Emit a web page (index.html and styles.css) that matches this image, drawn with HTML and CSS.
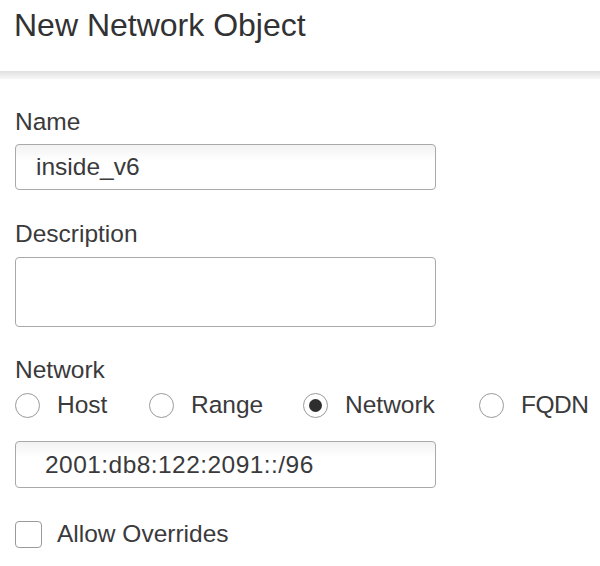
FILE: index.html
```html
<!DOCTYPE html>
<html>
<head>
<meta charset="utf-8">
<link rel="stylesheet" href="styles.css">
</head>
<body>
<div class="dialog">
  <header class="header"><h1 class="title">New Network Object</h1></header>
  <div class="sep"></div>
  <div class="form">
    <label class="label lbl-name">Name</label>
    <div class="input"><span class="val">inside_v6</span></div>
    <label class="label lbl-desc">Description</label>
    <div class="textarea"></div>
    <label class="label lbl-net">Network</label>
    <div class="radios">
      <div class="radio"><span class="circle"></span><span>Host</span></div>
      <div class="radio"><span class="circle"></span><span>Range</span></div>
      <div class="radio"><span class="circle checked"></span><span>Network</span></div>
      <div class="radio"><span class="circle"></span><span class="fqdn">FQDN</span></div>
    </div>
    <div class="input net-input"><span class="val net-val">2001:db8:122:2091::/96</span></div>
    <div class="check"><span class="box"></span><span>Allow Overrides</span></div>
  </div>
</div>
</body>
</html>
```
FILE: styles.css
```css
* { box-sizing: border-box; }
html, body { margin: 0; padding: 0; background: #fff; }
body { font-family: "Liberation Sans", Arial, sans-serif; color: #3a3a3c; width: 600px; height: 566px; overflow: hidden; }
.header { height: 71px; padding: 6px 0 0 14px; }
.title { margin: 0; font-weight: normal; font-size: 32px; line-height: 38px; color: #323234; }
.sep { height: 8px; background: linear-gradient(#e0e0e0, #f7f7f7); }
.form { padding: 0 0 0 15px; display: flex; flex-direction: column; }
.label { font-size: 24.5px; line-height: 28px; display: block; }
.lbl-name { margin-top: 29px; }
.lbl-desc { margin-top: 30px; }
.lbl-net { margin-top: 29px; }
.input { width: 421px; height: 46px; border: 1.5px solid #a9a9a9; border-radius: 4px; margin-top: 8px; display: flex; align-items: center; padding-left: 20px; font-size: 24.5px; background: linear-gradient(#f2f2f2, #fff 35%); }
.textarea { width: 421px; height: 70px; border: 1.5px solid #a9a9a9; border-radius: 4px; margin-top: 9px; }
.radios { display: grid; grid-template-columns: 134px 154px 176px auto; margin-top: 7px; height: 26px; align-items: center; font-size: 24.5px; }
.radio { display: flex; align-items: center; gap: 17px; }
.fqdn { letter-spacing: -0.5px; }
.circle { width: 25px; height: 25px; border: 1.5px solid #9a9a9a; border-radius: 50%; display: inline-flex; align-items: center; justify-content: center; flex: none; }
.circle.checked::after { content: ""; width: 13px; height: 13px; border-radius: 50%; background: #2e2e2e; }
.net-input { margin-top: 24px; height: 47px; padding-left: 29px; }
.net-val { letter-spacing: 0.45px; }
.check { display: flex; align-items: center; gap: 15px; margin-top: 32px; font-size: 24.5px; }
.box { width: 27px; height: 27px; border: 1.5px solid #9a9a9a; border-radius: 4px; flex: none; }
```
